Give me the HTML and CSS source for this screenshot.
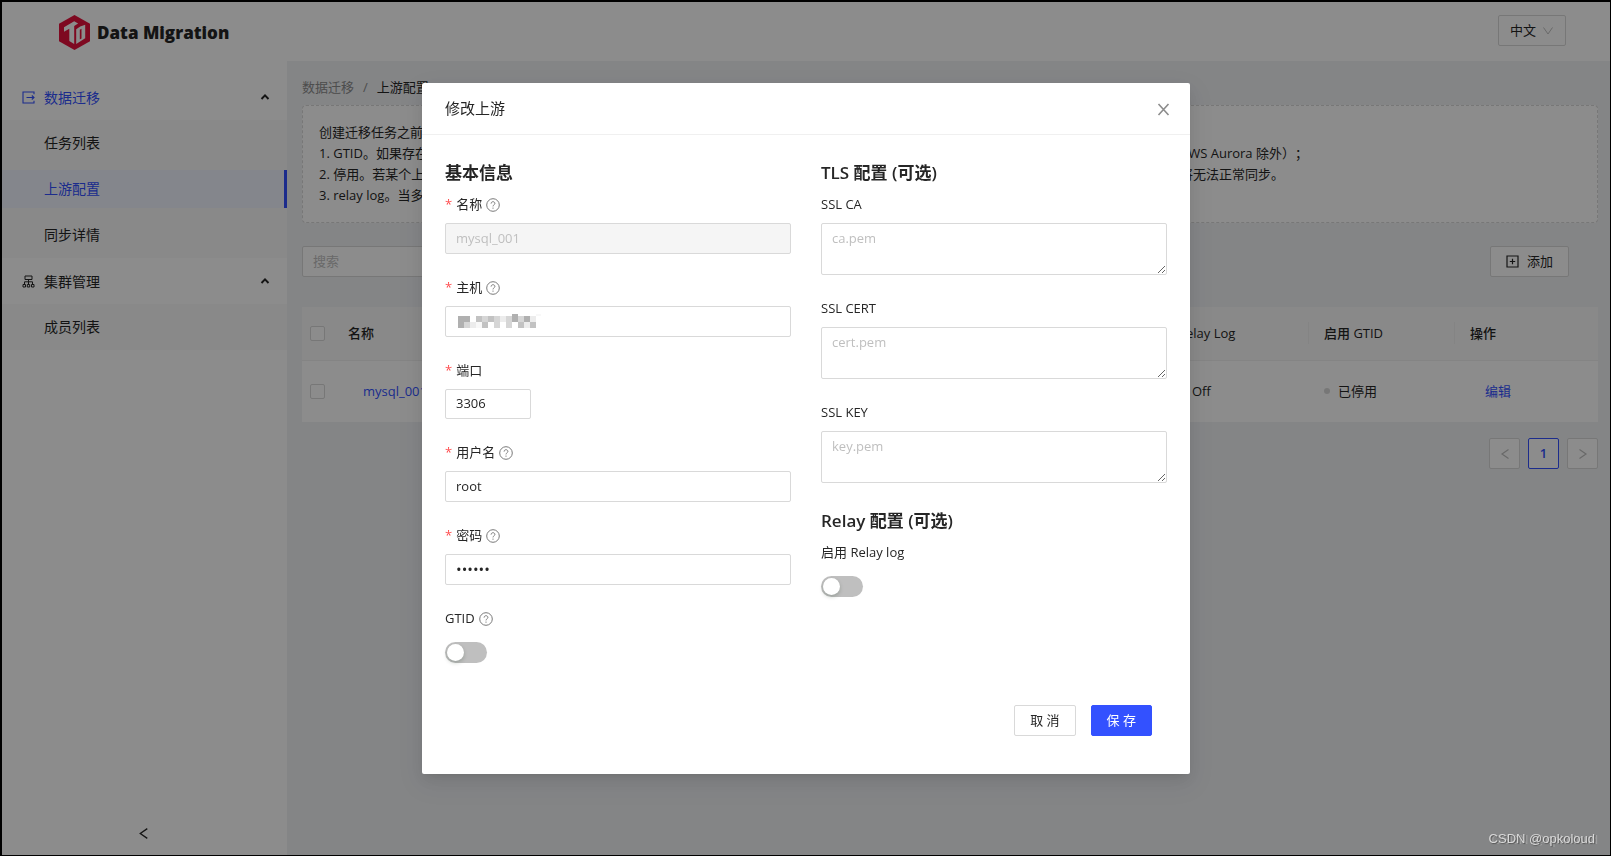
FILE: index.html
```html
<!DOCTYPE html>
<html lang="zh-CN">
<head>
<meta charset="utf-8">
<title>Data Migration</title>
<link rel="stylesheet" href="styles.css">
</head>
<body>
<svg class="sprite" aria-hidden="true">
  <symbol id="help" viewBox="0 0 14 14"><circle cx="7" cy="7" r="6.3" fill="none" stroke="currentColor"/><path d="M5.1 5.6c0-1.2.9-1.9 1.9-1.9s1.9.7 1.9 1.7c0 1.4-1.9 1.5-1.9 3" fill="none" stroke="currentColor"/><circle cx="7" cy="10.1" r=".7" fill="currentColor"/></symbol>
  <symbol id="up" viewBox="0 0 10 10"><path d="M1.5 7 5 3.3 8.500 7" fill="none" stroke="currentColor" stroke-width="1.900"/></symbol>
  <symbol id="down" viewBox="0 0 12 12"><path d="M1.500 2.500 6 9l4.500-6.500" fill="none" stroke="currentColor"/></symbol>
  <symbol id="left" viewBox="0 0 12 12"><path d="M9.500 1.500 3 6l6.500 4.500" fill="none" stroke="currentColor" stroke-width="1.200"/></symbol>
  <symbol id="right" viewBox="0 0 12 12"><path d="M2.500 1.500 9 6l-6.500 4.500" fill="none" stroke="currentColor" stroke-width="1.200"/></symbol>
</svg>

<div class="app">
  <header class="topbar">
    <div class="brand">
      <svg class="logo" viewBox="0 0 31 35" aria-hidden="true">
        <path fill="#e6123c" d="M15.500 0 31 8.800v17.400L15.500 35 0 26.200V8.800z"/>
        <path fill="#fff" d="M5 12.300 15.200 6.300l3.900 2.300-3.900 2.300v18L10.300 26V13.800L5 16.800z"/>
        <path fill="#fff" d="M17.200 14.200l4-2.600 5-1.800v13.500l-9 5.600z"/>
        <path fill="#e6123c" d="M20.800 14.800l1.700-1v9.700l-1.700 1z"/>
      </svg>
      <span class="brand-name">Data Migration</span>
    </div>
    <button class="lang" type="button">中文<svg class="icon-12 faint"><use href="#down"/></svg></button>
  </header>

  <div class="main">
    <nav class="sidebar">
      <div class="menu">
        <button class="group active" type="button">
          <svg class="icon-13" viewBox="0 0 13 13"><path d="M12 3.200V1H1v11h11V9.800M4.500 6.500H12M9.800 4.500l2.200 2-2.200 2" fill="none" stroke="currentColor" stroke-width="1.100"/></svg>
          <span>数据迁移</span><svg class="icon-10 caret"><use href="#up"/></svg>
        </button>
        <div class="submenu">
          <a class="item" href="#tasks">任务列表</a>
          <a class="item selected" href="#sources">上游配置</a>
          <a class="item" href="#sync">同步详情</a>
        </div>
        <button class="group" type="button">
          <svg class="icon-13" viewBox="0 0 13 13"><path d="M3 1h7v3.500H3zM6.500 4.500V9M2.500 9V6.800h8V9M1 9.500h2.500V12H1zM5.300 9.500h2.400V12H5.300zM9.500 9.500H12V12H9.500z" fill="none" stroke="currentColor"/></svg>
          <span>集群管理</span><svg class="icon-10 caret"><use href="#up"/></svg>
        </button>
        <div class="submenu">
          <a class="item" href="#members">成员列表</a>
        </div>
      </div>
      <button class="collapse" type="button" aria-label="收起"><svg class="icon-13"><use href="#left"/></svg></button>
    </nav>

    <main class="content">
      <nav class="crumbs"><a href="#root">数据迁移</a><span class="sep">/</span><span>上游配置</span></nav>
      <section class="notice">
        <p>创建迁移任务之前</p>
        <p><span>1. GTID。如果存在</span><span>AWS Aurora 除外）；</span></p>
        <p><span>2. 停用。若某个上游</span><span>将无法正常同步。</span></p>
        <p>3. relay log。当多个</p>
      </section>
      <div class="toolbar">
        <input class="input search" type="text" placeholder="搜索" aria-label="搜索">
        <button class="btn add" type="button"><svg class="icon-13" viewBox="0 0 13 13"><path d="M1 1h11v11H1zM3.800 6.500h5.400M6.500 3.800v5.400" fill="none" stroke="currentColor" stroke-width="1.200"/></svg>添加</button>
      </div>
      <table class="table">
        <colgroup><col class="c-check"><col><col class="c-mid"><col class="c-mid"><col class="c-last"></colgroup>
        <thead><tr>
          <th><input class="check" type="checkbox" aria-label="全选"></th>
          <th>名称</th>
          <th class="rule">Relay Log</th>
          <th class="rule">启用 GTID</th>
          <th>操作</th>
        </tr></thead>
        <tbody><tr>
          <td><input class="check" type="checkbox" aria-label="mysql_001"></td>
          <td><a class="link" href="#mysql_001">mysql_001</a></td>
          <td><span class="status">Off</span></td>
          <td><span class="status">已停用</span></td>
          <td><a class="link" href="#edit">编辑</a></td>
        </tr></tbody>
      </table>
      <div class="pager">
        <button class="page" type="button" disabled aria-label="上一页"><svg class="icon-12"><use href="#left"/></svg></button>
        <button class="page current" type="button">1</button>
        <button class="page" type="button" disabled aria-label="下一页"><svg class="icon-12"><use href="#right"/></svg></button>
      </div>
    </main>
  </div>
</div>

<div class="mask">
  <div class="modal" role="dialog" aria-labelledby="title">
    <div class="modal-head">
      <span class="modal-title" id="title">修改上游</span>
      <button class="close" type="button" aria-label="关闭"><svg class="icon-13" viewBox="0 0 13 13"><path d="M1.500 1l10 11M11.500 1l-10 11" fill="none" stroke="currentColor" stroke-width="1.600"/></svg></button>
    </div>
    <form class="modal-body">
      <div class="cols">
        <div class="col">
          <h3>基本信息</h3>
          <div class="field">
            <label for="name"><i class="req">*</i>名称<svg class="icon-14"><use href="#help"/></svg></label>
            <input class="input" id="name" type="text" value="mysql_001" disabled>
          </div>
          <div class="field">
            <label for="host"><i class="req">*</i>主机<svg class="icon-14"><use href="#help"/></svg></label>
            <div class="masked">
              <input class="input" id="host" type="text">
              <svg class="mosaic" viewBox="0 0 84 14" shape-rendering="crispEdges" aria-hidden="true">
                <path fill="#b0b0b0" d="M0 2h6v12H0zM6 2h6v6H6zM54 0h6v8h-6zM66 2h6v6h-6z"/>
                <path fill="#c2c2c2" d="M18 2h6v6h-6zM24 8h6v6h-6zM60 8h6v6h-6zM72 8h6v6h-6zM30 2h6v6h-6z"/>
                <path fill="#d6d6d6" d="M6 8h6v6H6zM24 2h6v6h-6zM36 2h6v12h-6zM48 2h6v12h-6zM60 2h6v6h-6z"/>
                <path fill="#ececec" d="M12 8h6v6h-6zM42 2h6v6h-6zM72 2h6v6h-6zM66 8h6v6h-6z"/>
                <path fill="#f8f8f8" d="M18 8h6v6h-6zM78 0h5v2h-5z"/>
              </svg>
            </div>
          </div>
          <div class="field">
            <label for="port"><i class="req">*</i>端口</label>
            <input class="input port" id="port" type="text" value="3306">
          </div>
          <div class="field">
            <label for="user"><i class="req">*</i>用户名<svg class="icon-14"><use href="#help"/></svg></label>
            <input class="input" id="user" type="text" value="root">
          </div>
          <div class="field">
            <label for="pass"><i class="req">*</i>密码<svg class="icon-14"><use href="#help"/></svg></label>
            <input class="input password" id="pass" type="password" value="secret">
          </div>
          <div class="field">
            <label for="gtid">GTID<svg class="icon-14"><use href="#help"/></svg></label>
            <input class="switch" id="gtid" type="checkbox" role="switch">
          </div>
        </div>
        <div class="col">
          <h3>TLS 配置 (可选)</h3>
          <div class="field"><label for="ca">SSL CA</label><textarea class="input area" id="ca" placeholder="ca.pem"></textarea></div>
          <div class="field"><label for="cert">SSL CERT</label><textarea class="input area" id="cert" placeholder="cert.pem"></textarea></div>
          <div class="field"><label for="key">SSL KEY</label><textarea class="input area" id="key" placeholder="key.pem"></textarea></div>
          <h3>Relay 配置 (可选)</h3>
          <div class="field"><label for="relay">启用 Relay log</label><input class="switch" id="relay" type="checkbox" role="switch"></div>
        </div>
      </div>
      <div class="actions">
        <button class="btn" type="button">取 消</button>
        <button class="btn primary" type="button">保 存</button>
      </div>
    </form>
  </div>
</div>
<div class="watermark">CSDN @opkoloud</div>
</body>
</html>
```
FILE: styles.css
```css
* { box-sizing: border-box; }
html, body { height: 100%; }
body {
  margin: 0;
  border: solid #000;
  border-width: 2px 1px 1px 2px;
  color: #262626;
  font: 13px/21px "Open Sans", "Noto Sans CJK SC", sans-serif;
  text-spacing-trim: space-all;
  overflow: hidden;
}
button, input, textarea { font: inherit; color: inherit; }
button { cursor: pointer; }
a { color: inherit; text-decoration: none; }
.sprite { position: absolute; width: 0; height: 0; }
.icon-10 { width: 10px; height: 10px; }
.icon-12 { width: 12px; height: 12px; }
.icon-13 { width: 13px; height: 13px; }
.icon-14 { width: 14px; height: 14px; color: #7a7a7a; }
.faint { color: #bfbfbf; }

.app { display: flex; flex-direction: column; height: 100%; }
.topbar {
  display: flex;
  align-items: flex-start;
  justify-content: space-between;
  height: 59px;
  padding: 13px 44px 0 57px;
  background: #fff;
}
.brand { display: flex; align-items: center; gap: 7px; }
.logo { width: 31px; height: 35px; }
.brand-name { font-size: 17px; font-weight: 800; }
.lang {
  display: flex;
  align-items: center;
  gap: 6px;
  height: 31px;
  padding: 0 11px;
  border: 1px solid #d9d9d9;
  border-radius: 2px;
  background: #fff;
}

.main { display: flex; flex: 1; min-height: 0; }
.sidebar {
  display: flex;
  flex-direction: column;
  justify-content: space-between;
  flex: 0 0 285px;
  padding-top: 13px;
  background: #fff;
}
.group {
  display: flex;
  align-items: center;
  gap: 9px;
  width: 100%;
  height: 46px;
  padding: 0 17px 0 20px;
  border: 0;
  background: none;
  font-size: 14px;
}
.group.active { color: #3351ff; }
.caret { margin-left: auto; color: #262626; }
.submenu { display: flow-root; background: #fafafa; }
.item {
  display: block;
  height: 38px;
  margin: 4px 0;
  padding-left: 42px;
  font-size: 14px;
  line-height: 38px;
}
.item + .item { margin-top: 8px; }
.selected { border-right: 3px solid #3351ff; background: #f0f5ff; color: #3351ff; }
.collapse {
  align-self: center;
  display: flex;
  padding: 15px 18px 15px 15px;
  border: 0;
  background: none;
}

.content { flex: 1; padding: 16px 12px 0 15px; background: #f0f2f5; }
.crumbs { display: flex; gap: 9px; height: 28px; }
.crumbs a, .sep { color: #8c8c8c; }
.notice {
  padding: 16px;
  border: 1px dashed #d9d9d9;
  border-radius: 4px;
  background: #fff;
}
.notice p { display: grid; grid-template-columns: 861px auto; margin: 0; }
.toolbar {
  display: flex;
  justify-content: space-between;
  padding: 23px 29px 30px 0;
}
.input {
  width: 100%;
  height: 31px;
  padding: 3px 10px 5px;
  border: 1px solid #d9d9d9;
  border-radius: 2px;
  background: #fff;
  outline: 0;
}
.input::placeholder { color: #bfbfbf; }
.input:disabled { background: #f5f5f5; color: #bfbfbf; }
.search { width: 192px; }
.btn {
  display: flex;
  align-items: center;
  justify-content: center;
  gap: 8px;
  height: 31px;
  padding: 0 15px;
  border: 1px solid #d9d9d9;
  border-radius: 2px;
  background: #fff;
}
.primary { border-color: #3351ff; background: #3351ff; color: #fff; }

.table { width: 100%; border-collapse: collapse; table-layout: fixed; background: #fff; }
.c-check { width: 31px; }
.c-mid { width: 146px; }
.c-last { width: 143px; }
.table th { position: relative; height: 53px; padding: 0 15px; border-bottom: 1px solid #f0f0f0; background: #fafafa; font-weight: 500; text-align: left; }
.table td { height: 62px; padding: 0 15px; }
.table th:first-child, .table td:first-child { padding: 0 8px; }
.rule::after { content: ""; position: absolute; top: 15px; right: 0; width: 1px; height: 22px; background: #f0f0f0; }
.check {
  appearance: none;
  display: block;
  width: 15px;
  height: 15px;
  margin: 0;
  border: 1px solid #d9d9d9;
  border-radius: 2px;
  background: #fff;
}
.link { padding-left: 15px; color: #3351ff; }
.status { display: flex; align-items: center; gap: 8px; }
.status::before { content: ""; width: 6px; height: 6px; border-radius: 50%; background: #d9d9d9; }
.pager { display: flex; justify-content: flex-end; gap: 8px; padding-top: 16px; }
.page {
  display: flex;
  align-items: center;
  justify-content: center;
  width: 31px;
  height: 31px;
  padding: 0;
  border: 1px solid #d9d9d9;
  border-radius: 2px;
  background: #fff;
}
.page:disabled { color: #bfbfbf; }
.current { border-color: #3351ff; color: #3351ff; font-weight: 600; }

.mask {
  position: fixed;
  inset: 2px 1px 1px 2px;
  display: flex;
  align-items: flex-start;
  justify-content: center;
  padding-top: 81px;
  background: rgba(0, 0, 0, .45);
}
.modal {
  width: 768px;
  border-radius: 2px;
  background: #fff;
  box-shadow: 0 3px 6px -4px rgba(0, 0, 0, .12), 0 6px 16px rgba(0, 0, 0, .08), 0 9px 28px 8px rgba(0, 0, 0, .05);
}
.modal-head {
  display: flex;
  align-items: center;
  justify-content: space-between;
  height: 52px;
  padding: 0 20px 0 23px;
  border-bottom: 1px solid #f0f0f0;
}
.modal-title { font-size: 15px; }
.close { display: flex; padding: 1px 0 0; border: 0; background: none; color: #8c8c8c; }
.modal-body { padding: 23px 23px 38px; }
.cols { display: grid; grid-template-columns: 1fr 1fr; gap: 30px; }
h3 { margin: 0 0 6px; font-size: 17px; font-weight: 600; line-height: 30px; }
.field { display: flex; flex-direction: column; align-items: flex-start; gap: 8px; margin-bottom: 23px; }
.field label { display: flex; align-items: center; gap: 4px; }
.req { color: #ff4d4f; font-style: normal; }
.masked { position: relative; width: 100%; }
.masked .input { display: block; }
.mosaic { position: absolute; left: 13px; top: 8px; width: 84px; height: 14px; }
.port { width: 86px; height: 30px; }
.password { font-size: 15px; }
.area { height: 52px; padding-top: 4px; resize: vertical; }
.switch {
  appearance: none;
  width: 42px;
  height: 21px;
  margin: 5px 0 0;
  padding: 2px;
  border-radius: 11px;
  background: #bfbfbf;
}
.switch::before {
  content: "";
  display: block;
  width: 17px;
  height: 17px;
  border-radius: 50%;
  background: #fff;
  box-shadow: 0 2px 4px rgba(0, 35, 11, .2);
}
.actions { display: flex; justify-content: flex-end; gap: 15px; padding: 19px 15px 0 0; }
.watermark {
  position: fixed;
  right: 16px;
  bottom: 7px;
  color: #d9d9d9;
  font: 13px/20px "Liberation Sans", Arial, sans-serif;
  text-shadow: 1px 1px 1px #555, 3px 1px 0 rgba(190, 190, 190, .5);
}
```
